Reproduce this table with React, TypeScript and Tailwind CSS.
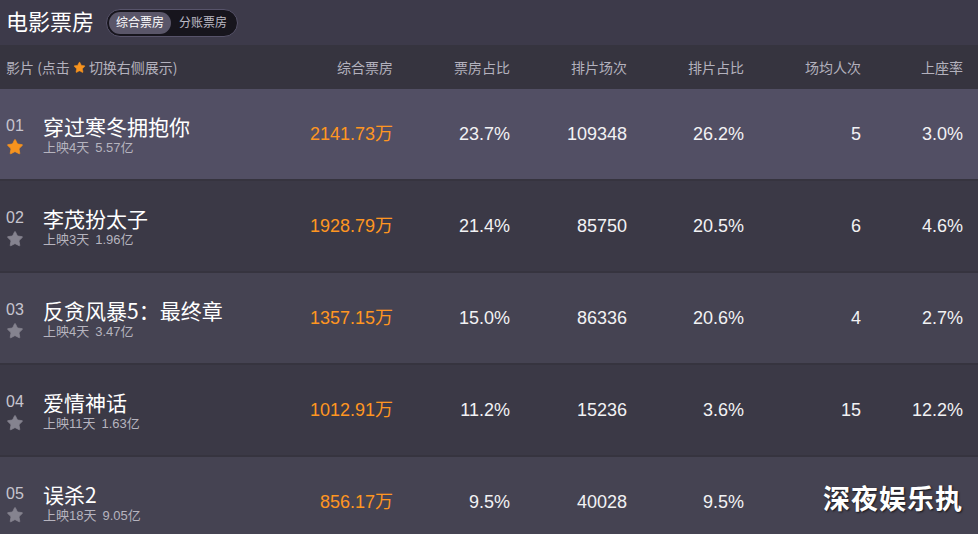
import { Star } from "lucide-react";

interface Movie {
  rank: string;
  name: string;
  days: string;
  total: string;
  box: string;
  boxRate: string;
  shows: string;
  showRate: string;
  avg: string;
  seat: string;
}

const movies: Movie[] = [
  { rank: "01", name: "穿过寒冬拥抱你", days: "上映4天", total: "5.57亿", box: "2141.73万", boxRate: "23.7%", shows: "109348", showRate: "26.2%", avg: "5", seat: "3.0%" },
  { rank: "02", name: "李茂扮太子", days: "上映3天", total: "1.96亿", box: "1928.79万", boxRate: "21.4%", shows: "85750", showRate: "20.5%", avg: "6", seat: "4.6%" },
  { rank: "03", name: "反贪风暴5：最终章", days: "上映4天", total: "3.47亿", box: "1357.15万", boxRate: "15.0%", shows: "86336", showRate: "20.6%", avg: "4", seat: "2.7%" },
  { rank: "04", name: "爱情神话", days: "上映11天", total: "1.63亿", box: "1012.91万", boxRate: "11.2%", shows: "15236", showRate: "3.6%", avg: "15", seat: "12.2%" },
  { rank: "05", name: "误杀2", days: "上映18天", total: "9.05亿", box: "856.17万", boxRate: "9.5%", shows: "40028", showRate: "9.5%", avg: "", seat: "" },
];

const cols = "grid grid-cols-[1fr_117px_117px_117px_117px_117px_102px] pr-[15px]";
const rowBg = ["bg-[#524f64]", "bg-[#3b3946]", "bg-[#454352]", "bg-[#3b3946]", "bg-[#454352]"];

export default function App() {
  return (
    <div
      className="relative h-[534px] w-[978px] overflow-hidden bg-[#36343f] text-white"
      style={{ fontFamily: '"Liberation Sans", Arial, "Noto Sans CJK SC", sans-serif' }}
    >
      <div className="flex h-[45px] items-center gap-[12px] bg-[#3d3a4a] pl-[6px]">
        <h1 className="text-[22px] leading-none text-white">电影票房</h1>
        <div className="flex h-[28px] items-center rounded-full border border-[#57536a] bg-[#17151d] p-[2px] text-[12px]">
          <span className="flex h-full items-center rounded-full bg-[#5a5669] px-[7px] text-white">综合票房</span>
          <span className="px-[8px] text-[#bdbbc6]">分账票房</span>
        </div>
      </div>

      <div
        className={`${cols} h-[44px] items-center bg-[#36343f] text-[14px] text-[#b3b1bd]`}
        style={{ fontFamily: '"Noto Sans CJK SC", "Liberation Sans", sans-serif' }}
      >
        <div className="flex items-center pl-[6px]">
          影片 (点击
          <Star className="mx-[3px] h-[13px] w-[13px] fill-[#f7931e] text-[#f7931e]" strokeWidth={1} />
          切换右侧展示)
        </div>
        <div className="text-right">综合票房</div>
        <div className="text-right">票房占比</div>
        <div className="text-right">排片场次</div>
        <div className="text-right">排片占比</div>
        <div className="text-right">场均人次</div>
        <div className="text-right">上座率</div>
      </div>

      <div className="flex flex-col gap-[2px]">
        {movies.map((m, i) => (
          <div key={m.rank} className={`${cols} h-[90px] items-center ${rowBg[i]} text-[18px] text-[#f2f2f4]`}>
            <div className="flex items-start pl-[6px] pt-[2px]">
              <div className="flex w-[37px] flex-col pt-[3px]">
                <span className="text-[16px] leading-[18px] text-[#c7c5cf]">{m.rank}</span>
                <Star
                  className={`mt-[3px] h-[18px] w-[18px] ${i === 0 ? "fill-[#f7931e] text-[#f7931e]" : "fill-[#85838f] text-[#85838f]"}`}
                  strokeWidth={1}
                />
              </div>
              <div className="flex flex-col">
                <span className="text-[21px] leading-[25px] text-white" style={{ fontFamily: '"Noto Sans CJK SC", sans-serif' }}>
                  {m.name}
                </span>
                <span className="mt-[1px] text-[13px] leading-[15px] text-[#b6b4bf]">
                  {m.days}
                  <span className="ml-[6px]">{m.total}</span>
                </span>
              </div>
            </div>
            <div className="text-right text-[#ff9621]">{m.box}</div>
            <div className="text-right">{m.boxRate}</div>
            <div className="text-right">{m.shows}</div>
            <div className="text-right">{m.showRate}</div>
            <div className="text-right">{m.avg}</div>
            <div className="text-right">{m.seat}</div>
          </div>
        ))}
      </div>

      <div
        className="absolute left-[823px] top-[484px] text-[27px] font-bold leading-none tracking-[1px] text-white"
        style={{ fontFamily: '"Noto Sans CJK SC", sans-serif', textShadow: "1px 1px 2px rgba(0,0,0,0.7)" }}
      >
        深夜娱乐执
      </div>
    </div>
  );
}
